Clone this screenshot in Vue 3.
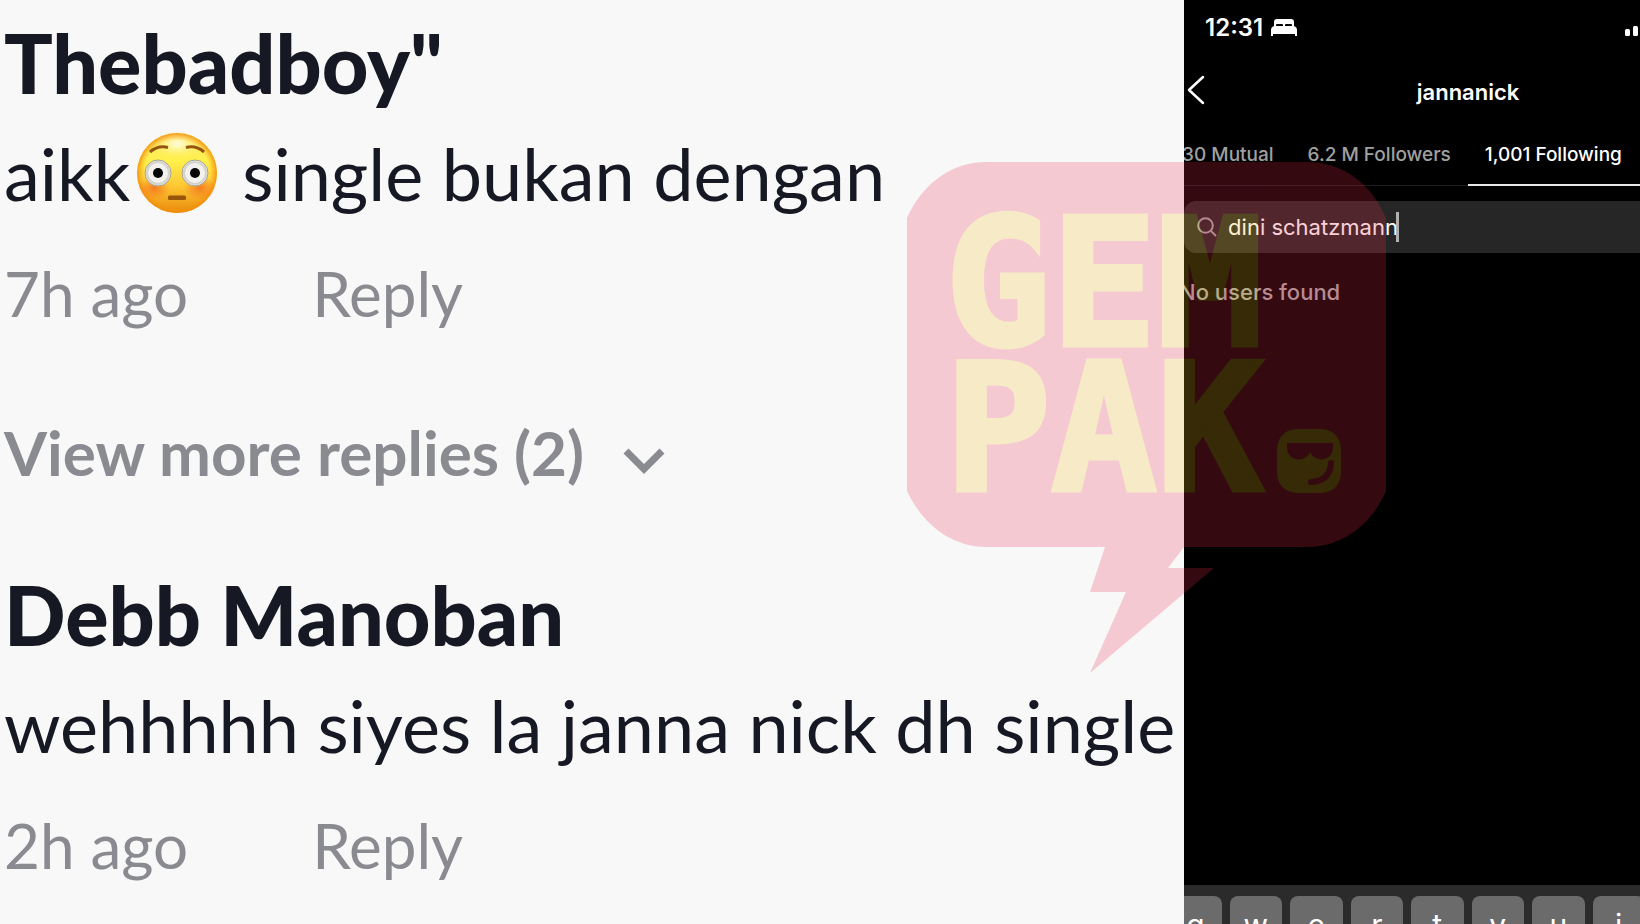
<script setup>
import { ref } from 'vue';

const comments = [
  { id: 1, name: 'Thebadboy"', before: 'aikk', emoji: true, after: 'single bukan dengan', time: '7h ago', more: 2 },
  { id: 2, name: 'Debb Manoban', before: 'wehhhhh siyes la janna nick dh single', time: '2h ago' },
];

const tabs = ['30 Mutual', '6.2 M Followers', '1,001 Following'];
const activeTab = ref(2);
const query = ref('dini schatzmann');
const keys = ['q', 'w', 'e', 'r', 't', 'y', 'u', 'i'];
</script>

<template>
  <main class="board">
    <section class="comments">
      <article v-for="c in comments" :key="c.id" class="comment">
        <h2 class="name">{{ c.name }}</h2>
        <p class="body">
          <span>{{ c.before }}</span>
          <svg v-if="c.emoji" class="emoji" viewBox="0 0 82 82" role="img" aria-label="flushed face">
            <defs>
              <linearGradient id="skin" x1="0" y1="0" x2="0" y2="1">
                <stop offset="0" stop-color="#ffe97a" />
                <stop offset="0.35" stop-color="#fff04a" />
                <stop offset="0.65" stop-color="#ffc935" />
                <stop offset="1" stop-color="#e88a0c" />
              </linearGradient>
              <radialGradient id="rim">
                <stop offset="0.82" stop-color="#f79a10" stop-opacity="0" />
                <stop offset="1" stop-color="#f08c08" stop-opacity="0.85" />
              </radialGradient>
              <radialGradient id="shine">
                <stop offset="0" stop-color="#fffff0" stop-opacity="0.9" />
                <stop offset="1" stop-color="#fff67a" stop-opacity="0" />
              </radialGradient>
              <radialGradient id="blush">
                <stop offset="0" stop-color="#f4661c" stop-opacity="0.75" />
                <stop offset="1" stop-color="#f4661c" stop-opacity="0" />
              </radialGradient>
            </defs>
            <circle cx="41" cy="41" r="40" fill="url(#skin)" />
            <ellipse cx="41" cy="12" rx="24" ry="14" fill="url(#shine)" />
            <circle cx="41" cy="41" r="40" fill="url(#rim)" />
            <ellipse cx="18" cy="56" rx="16" ry="12" fill="url(#blush)" />
            <ellipse cx="64" cy="56" rx="16" ry="12" fill="url(#blush)" />
            <g stroke="#a3a095" stroke-width="1" fill="#f2f1ed">
              <circle cx="22" cy="41" r="13" />
              <circle cx="59" cy="41" r="13" />
            </g>
            <g fill="none" stroke="#d3d2cc" stroke-width="2">
              <circle cx="22" cy="41" r="11" />
              <circle cx="59" cy="41" r="11" />
            </g>
            <circle cx="22" cy="41" r="5" fill="#050505" />
            <circle cx="59" cy="41" r="5" fill="#050505" />
            <path d="M14 20Q22 13 32 15.500M50 15.500Q60 13 68 20" fill="none" stroke="#935510" stroke-width="3" />
            <rect x="32" y="63.500" width="18" height="4.500" rx="1.500" fill="#99560a" />
          </svg>
          <span v-if="c.after">{{ c.after }}</span>
        </p>
        <div class="meta">
          <time>{{ c.time }}</time>
          <button type="button" class="plain">Reply</button>
        </div>
        <button v-if="c.more" type="button" class="plain more">
          View more replies ({{ c.more }})
          <svg class="more-arrow" viewBox="0 0 44 28" aria-hidden="true">
            <path d="M4 5L22 23L40 5" fill="none" stroke="#8a8b91" stroke-width="7" />
          </svg>
        </button>
      </article>
    </section>

    <section class="phone">
      <div class="status">
        <span>12:31</span>
        <svg class="bed" viewBox="0 0 26 18" aria-hidden="true">
          <path
            d="M3 8V3Q3 0 6 0H20Q23 0 23 3V8H21V6Q21 5 20 5H15Q14 5 14 6V7H12V6Q12 5 11 5H6Q5 5 5 6V8ZM3 7H23Q26 8 26 11V17H24V15H2V17H0V11Q0 8 3 7Z"
            fill="#fff"
          />
        </svg>
        <svg class="signal" viewBox="0 0 15 16" aria-hidden="true">
          <rect x="0" y="9" width="5" height="7" rx="1.500" fill="#fff" />
          <rect x="8" y="6" width="5" height="10" rx="1.500" fill="#fff" />
        </svg>
      </div>

      <header class="top">
        <button type="button" class="plain back" aria-label="Back">
          <svg viewBox="0 0 18 30" aria-hidden="true">
            <path d="M16 2L2 15L16 28" fill="none" stroke="#fff" stroke-width="2.500" stroke-linecap="round" stroke-linejoin="round" />
          </svg>
        </button>
        <h1>jannanick</h1>
      </header>

      <nav class="tabs">
        <button
          v-for="(tab, i) in tabs"
          :key="tab"
          type="button"
          class="tab"
          :class="{ active: activeTab === i }"
          @click="activeTab = i"
        >
          {{ tab }}
        </button>
      </nav>

      <label class="search">
        <svg viewBox="0 0 20 20" aria-hidden="true">
          <circle cx="8.500" cy="8.500" r="7.300" fill="none" stroke="#a5a5a5" stroke-width="2" />
          <path d="M14 14L19 19" stroke="#a5a5a5" stroke-width="2" />
        </svg>
        <input v-model="query" type="text" aria-label="Search" />
        <span class="caret"></span>
      </label>

      <p class="empty">No users found</p>

      <div class="keyboard">
        <button v-for="k in keys" :key="k" type="button" class="key">{{ k }}</button>
      </div>
    </section>

    <!-- WATERMARK -->
    <svg class="watermark" viewBox="0 0 480 512" role="img" aria-label="Gempak">
      <g opacity="0.22">
        <path
          d="M0 56C15 23 43 0 80 0H400C437 0 465 23 479 56V329C465 361 437 385 400 385H277L261 406H307L183 511L219 430H183L198 385H80C43 385 15 361 0 329Z"
          fill="#ec2949"
        />
        <text class="mark" x="38" y="183">GEM</text>
        <text class="mark" x="38" y="328">PAK</text>
        <path
          d="M393 267H411C427 267 434 275 434 290V308C434 323 427 331 411 331H393C377 331 370 323 370 308V290C370 275 377 267 393 267Z"
          fill="#f5be20"
        />
        <path d="M380 281H426V285C426 300 408 301 403 290C398 301 380 300 380 285Z" fill="#ec2949" />
        <path d="M424 301Q423 319 404 320" fill="none" stroke="#ec2949" stroke-width="6" stroke-linecap="round" />
      </g>
    </svg>
  </main>
</template>

<style>
body {
  margin: 0;
}
</style>

<style scoped>
.board {
  position: relative;
  display: grid;
  grid-template-columns: 72.2% minmax(0, 1fr);
  height: 100vh;
  overflow: hidden;
  background: #f8f8f8;
}

h1,
h2,
p {
  margin: 0;
}

.plain {
  padding: 0;
  border: none;
  background: none;
  color: inherit;
  font: inherit;
  cursor: pointer;
}

/* COMMENTS */
.comments {
  display: flex;
  flex-direction: column;
  gap: 83px;
  padding: 18px 0 0 4px;
  overflow: hidden;
  white-space: nowrap;
  font-family: Lato, "Liberation Sans", sans-serif;
  color: #161823;
}

.comment {
  display: flex;
  flex-direction: column;
  align-items: flex-start;
}

.name {
  font-size: 81px;
  line-height: 90px;
  font-weight: 900;
}

.body {
  display: flex;
  align-items: center;
  margin-top: 21px;
  font-size: 72px;
  line-height: 88px;
}

.emoji {
  width: 82px;
  height: 82px;
  margin: 0 24px 0 6px;
}

.meta {
  display: flex;
  gap: 124px;
  margin-top: 41px;
  font-size: 62px;
  line-height: 70px;
  color: #8a8b91;
}

.more {
  display: flex;
  align-items: center;
  gap: 38px;
  margin-top: 89px;
  font-size: 62px;
  line-height: 70px;
  font-weight: 700;
  color: #8a8b91;
}

.more-arrow {
  width: 44px;
  height: 28px;
  margin-top: 16px;
}

/* PHONE */
.phone {
  display: flex;
  flex-direction: column;
  overflow: hidden;
  white-space: nowrap;
  background: #000;
  color: #fff;
  font-family: Inter, Roboto, sans-serif;
}

.status {
  display: flex;
  align-items: center;
  gap: 8px;
  padding: 12px 0 0 21px;
  font-size: 24px;
  line-height: 32px;
  font-weight: 600;
}

.bed {
  width: 26px;
  height: 18px;
}

.signal {
  width: 15px;
  height: 16px;
  margin-left: auto;
}

.top {
  display: grid;
  grid-template-columns: 24px 514px;
  align-items: center;
  margin-top: 26px;
  padding: 0 3px;
}

.back svg {
  display: block;
  width: 18px;
  height: 30px;
}

.top h1 {
  padding-top: 4px;
  text-align: center;
  font-size: 22px;
  line-height: 36px;
  font-weight: 600;
}

.tabs {
  display: flex;
  height: 75px;
  border-bottom: 1px solid #1c1c1c;
}

.tab {
  flex-shrink: 0;
  display: flex;
  margin-bottom: -1px;
  padding: 33px 17px 0;
  border: none;
  border-bottom: 2px solid transparent;
  background: none;
  color: #a0a0a0;
  font: 500 19px/24px Inter, Roboto, sans-serif;
  cursor: pointer;
}

.tab:first-child {
  margin-left: -19px;
}

.tab.active {
  flex-grow: 1;
  border-color: #e8e8e8;
  color: #fff;
}

.search {
  display: flex;
  align-items: center;
  height: 52px;
  margin-top: 15px;
  padding-left: 13px;
  border-radius: 12px 0 0 12px;
  background: #262626;
}

.search svg {
  width: 20px;
  height: 20px;
  margin-right: 11px;
}

.search input {
  width: 168px;
  padding: 0;
  border: none;
  outline: none;
  background: none;
  color: #fff;
  font: 400 22px/30px Inter, Roboto, sans-serif;
}

.caret {
  width: 3px;
  height: 30px;
  background: #b0b0b0;
}

.empty {
  margin: 24px 0 0 -5px;
  font-size: 22px;
  line-height: 30px;
  font-weight: 500;
  color: #a8a8a8;
}

/* KEYBOARD */
.keyboard {
  display: grid;
  grid-template-columns: repeat(8, 1fr);
  gap: 8px;
  height: 28px;
  margin: auto -5px 0 -15px;
  padding-top: 11px;
  background: #2b2b2b;
}

.key {
  height: 58px;
  padding: 0;
  border: none;
  border-radius: 8px;
  background: #6b6b6b;
  color: #fff;
  font: 400 30px/40px Inter, Roboto, sans-serif;
}

/* WATERMARK */
.watermark {
  position: absolute;
  top: 162px;
  left: 55.3%;
  width: 480px;
  height: 512px;
  pointer-events: none;
}

.mark {
  fill: #f5be20;
  stroke: #f5be20;
  stroke-width: 5px;
  font: 700 176px "DejaVu Sans Mono", monospace;
}
</style>
